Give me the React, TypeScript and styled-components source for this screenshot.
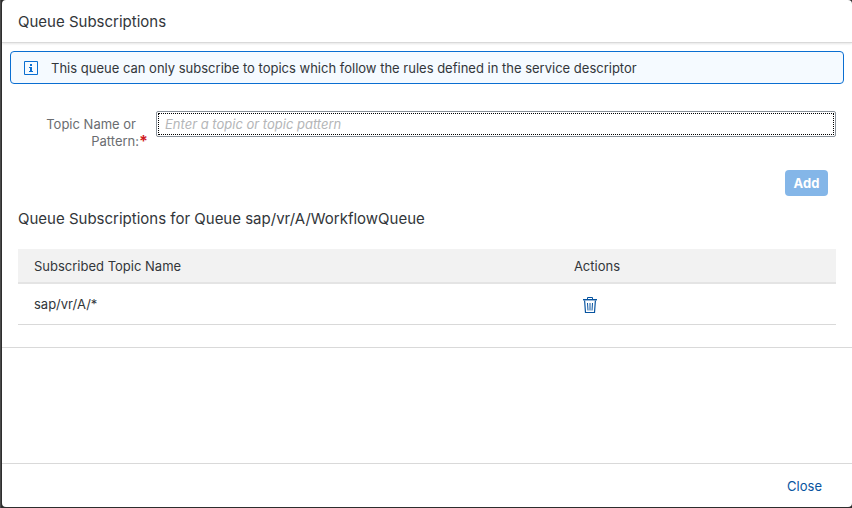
import React, { useState } from "react";
import styled, { createGlobalStyle } from "styled-components";

const GlobalStyle = createGlobalStyle`
  *, *::before, *::after { box-sizing: border-box; }
  body {
    margin: 0;
    background: #333333;
    color: #32363a;
    font: 13px/17px Inter, "Liberation Sans", sans-serif;
  }
`;

const Backdrop = styled.div`
  display: flex;
  min-height: 100vh;
  padding: 0 0 1px 2px;
  background: linear-gradient(90deg, #4a4a4a 0 1px, #2d2d2d 1px);
`;

const Dialog = styled.section`
  display: flex;
  flex: 1;
  flex-direction: column;
  min-width: 0;
  overflow: hidden;
  border-radius: 4px;
  background: #ffffff;
`;

const DialogHeader = styled.header`
  display: flex;
  align-items: center;
  height: 43px;
  padding: 2px 16px 0;
  border-bottom: 1px solid #d9d9d9;
  box-shadow: 0 1px 2px rgba(0, 0, 0, 0.1);
`;

const Title = styled.h1`
  margin: 0;
  font-size: 15px;
  font-weight: 400;
  line-height: 20px;
`;

const DialogBody = styled.main`
  flex: 1;
`;

const Content = styled.div`
  padding: 8px 16px 22px;
  border-bottom: 1px solid #d9d9d9;
`;

const MessageStrip = styled.div`
  display: flex;
  align-items: center;
  gap: 13px;
  min-height: 33px;
  margin: 0 -8px;
  padding: 1px 13px 0;
  border: 1px solid #0a6ed1;
  border-radius: 4px;
  background: #f5faff;
`;

const Form = styled.form`
  display: grid;
  grid-template-columns: 130px 1fr;
  column-gap: 8px;
  padding-top: 27px;
`;

const FieldLabel = styled.label`
  padding-top: 5px;
  color: #6a6d70;
  text-align: right;
`;

const LabelLine = styled.span`
  display: block;
  padding-right: 12px;
`;

const Required = styled.span`
  color: #d01c24;
  font-size: 16px;
  font-weight: 700;
  line-height: 17px;
  vertical-align: top;
`;

const TopicInput = styled.input`
  width: 100%;
  height: 26px;
  padding: 0 8px;
  border: 1px solid #89919a;
  border-radius: 2px;
  outline: 1px dotted #000000;
  outline-offset: -3px;
  background: #ffffff;
  color: #32363a;
  font: inherit;

  &::placeholder {
    color: #b4b6b8;
    font-style: italic;
    opacity: 1;
  }
`;

const AddButton = styled.button`
  grid-column: 2;
  justify-self: end;
  min-width: 43px;
  height: 26px;
  margin: 20px 8px 0 0;
  padding: 0 8px;
  border: 0;
  border-radius: 4px;
  background: #84b6e8;
  color: #ffffff;
  font: inherit;
  font-weight: 700;
`;

const SectionTitle = styled.h2`
  margin: 13px 0 20px;
  font-size: 15px;
  font-weight: 400;
  line-height: 20px;
`;

const Table = styled.table`
  width: 100%;
  border-collapse: separate;
  border-spacing: 0;
  table-layout: fixed;
`;

const HeadCell = styled.th<{ $width?: string }>`
  width: ${({ $width }) => $width ?? "auto"};
  height: 35px;
  padding: 2px 16px 0;
  border-bottom: 2px solid #e4e4e4;
  background: #f2f2f2;
  font-weight: 400;
  text-align: left;
`;

const Cell = styled.td`
  height: 41px;
  padding: 0 16px;
  border-bottom: 1px solid #d9d9d9;
`;

const IconButton = styled.button`
  display: grid;
  place-items: center;
  width: 32px;
  height: 26px;
  padding: 1px 0 0;
  border: 0;
  background: transparent;
  color: #0854a0;
`;

const DialogFooter = styled.footer`
  display: flex;
  align-items: center;
  justify-content: flex-end;
  height: 44px;
  padding: 2px 22px 0;
  border-top: 1px solid #d9d9d9;
`;

const CloseButton = styled.button`
  height: 26px;
  padding: 0 8px;
  border: 0;
  background: transparent;
  color: #0854a0;
  font: inherit;
`;

function InfoIcon() {
  return (
    <svg width="14" height="14" viewBox="0 0 14 14" fill="none" aria-hidden="true">
      <path d="M.5.5h13v13H.5z" stroke="#0a6ed1" />
      <path d="M6 3h2v2H6zM5 6h3v4h1v1H5v-1h1V7H5z" fill="#0a6ed1" />
    </svg>
  );
}

function DeleteIcon() {
  return (
    <svg width="14" height="16" viewBox="0 0 14 16" fill="none" stroke="currentColor" aria-hidden="true">
      <path d="M4.5 2V.5h5V2" />
      <path d="M0 2.7h14" strokeWidth="1.4" />
      <path d="M1.6 3.5l.9 12h9l.9-12" strokeWidth="1.2" />
      <path d="M4.5 6l.5 7.500M7 6v7.500M9.500 6l-.5 7.500" />
    </svg>
  );
}

export default function App() {
  const [topic, setTopic] = useState("");
  const topics = ["sap/vr/A/*"];

  return (
    <>
      <GlobalStyle />
      <Backdrop>
        <Dialog role="dialog" aria-labelledby="dialog-title">
          <DialogHeader>
            <Title id="dialog-title">Queue Subscriptions</Title>
          </DialogHeader>
          <DialogBody>
            <Content>
              <MessageStrip role="note">
                <InfoIcon />
                <span>This queue can only subscribe to topics which follow the rules defined in the service descriptor</span>
              </MessageStrip>
              <Form onSubmit={(event) => event.preventDefault()}>
                <FieldLabel htmlFor="topic">
                  <LabelLine>Topic Name or</LabelLine>
                  Pattern:<Required>*</Required>
                </FieldLabel>
                <TopicInput
                  id="topic"
                  required
                  placeholder="Enter a topic or topic pattern"
                  value={topic}
                  onChange={(event) => setTopic(event.target.value)}
                />
                <AddButton type="submit" disabled={!topic}>Add</AddButton>
              </Form>
              <SectionTitle>Queue Subscriptions for Queue sap/vr/A/WorkflowQueue</SectionTitle>
              <Table>
                <thead>
                  <tr>
                    <HeadCell scope="col" $width="66%">Subscribed Topic Name</HeadCell>
                    <HeadCell scope="col">Actions</HeadCell>
                  </tr>
                </thead>
                <tbody>
                  {topics.map((name) => (
                    <tr key={name}>
                      <Cell>{name}</Cell>
                      <Cell>
                        <IconButton type="button" aria-label="Delete subscription">
                          <DeleteIcon />
                        </IconButton>
                      </Cell>
                    </tr>
                  ))}
                </tbody>
              </Table>
            </Content>
          </DialogBody>
          <DialogFooter>
            <CloseButton type="button">Close</CloseButton>
          </DialogFooter>
        </Dialog>
      </Backdrop>
    </>
  );
}
